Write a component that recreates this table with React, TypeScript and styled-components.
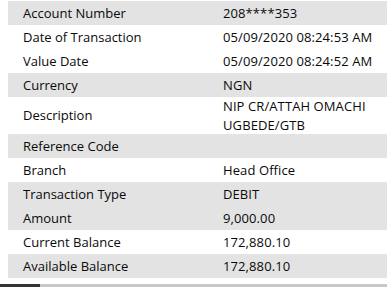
import React from "react";
import styled, { createGlobalStyle } from "styled-components";

const Global = createGlobalStyle`
  html, body { margin: 0; padding: 0; background: #ffffff; }
  body { font-family: "Open Sans", "Noto Sans", sans-serif; color: #0a0a0a; overflow: hidden; }
`;

const Page = styled.div`
  width: 387px;
  height: 287px;
  display: flex;
  flex-direction: column;
  box-sizing: border-box;
  padding-top: 1px;
`;

const Table = styled.div`
  margin-left: 8px;
  display: flex;
  flex-direction: column;
`;

const Row = styled.div<{ $shade: boolean; $tall: boolean }>`
  display: grid;
  grid-template-columns: 200px 1fr;
  height: ${(p) => (p.$tall ? "37px" : "24px")};
  align-items: center;
  background: ${(p) => (p.$shade ? "#e3e3e3" : "#ffffff")};
`;

const Label = styled.div`
  padding-left: 15px;
  font-size: 13px;
  line-height: 18.5px;
  white-space: nowrap;
`;

const Value = styled.div`
  padding-left: 15px;
  font-size: 13px;
  line-height: 18.5px;
  white-space: pre;
  letter-spacing: 0.1px;
`;

const Spacer = styled.div`
  flex: 1;
`;

const ScrollTrack = styled.div`
  height: 3px;
  display: flex;
  background: #c8c8c8;
`;

const ScrollThumb = styled.div`
  width: 40px;
  background: #333333;
`;

const rows: { label: string; value: string; shade: boolean }[] = [
  { label: "Account Number", value: "208****353", shade: true },
  { label: "Date of Transaction", value: "05/09/2020 08:24:53 AM", shade: false },
  { label: "Value Date", value: "05/09/2020 08:24:52 AM", shade: false },
  { label: "Currency", value: "NGN", shade: true },
  { label: "Description", value: "NIP CR/ATTAH OMACHI\nUGBEDE/GTB", shade: false },
  { label: "Reference Code", value: "", shade: true },
  { label: "Branch", value: "Head Office", shade: false },
  { label: "Transaction Type", value: "DEBIT", shade: true },
  { label: "Amount", value: "9,000.00", shade: true },
  { label: "Current Balance", value: "172,880.10", shade: false },
  { label: "Available Balance", value: "172,880.10", shade: true },
];

export default function App() {
  return (
    <>
      <Global />
      <Page>
        <Table>
          {rows.map((r) => (
            <Row key={r.label} $shade={r.shade} $tall={r.value.includes("\n")}>
              <Label>{r.label}</Label>
              <Value>{r.value}</Value>
            </Row>
          ))}
        </Table>
        <Spacer />
        <ScrollTrack>
          <ScrollThumb />
        </ScrollTrack>
      </Page>
    </>
  );
}
